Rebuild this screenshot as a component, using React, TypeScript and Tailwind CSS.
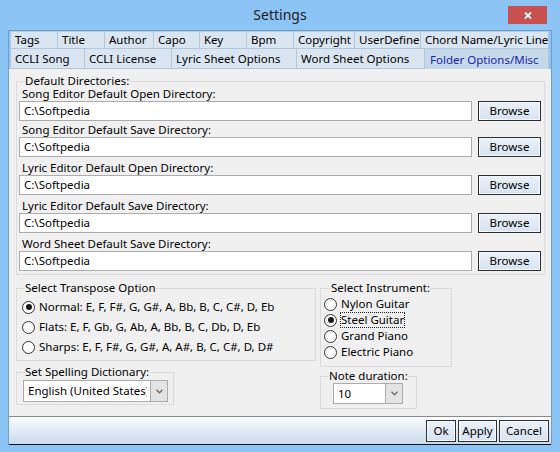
import React from "react"

const rowOne = [
	{ label: "Tags", w: "w-[47px]" },
	{ label: "Title", w: "w-[47px]" },
	{ label: "Author", w: "w-[49px]" },
	{ label: "Capo", w: "w-[46px]" },
	{ label: "Key", w: "w-[47px]" },
	{ label: "Bpm", w: "w-[47px]" },
	{ label: "Copyright", w: "w-[61px]" },
	{ label: "UserDefine", w: "w-[66px]" },
	{ label: "Chord Name/Lyric Line", w: "w-[128px]" },
]

const rowTwo = [
	{ label: "CCLI Song", w: "w-[74px]" },
	{ label: "CCLI License", w: "w-[87px]" },
	{ label: "Lyric Sheet Options", w: "w-[125px]" },
	{ label: "Word Sheet Options", w: "w-[128px]" },
	{ label: "Folder Options/Misc", w: "w-[124px]", current: true },
]

const dirs = [
	"Song Editor Default Open Directory:",
	"Song Editor Default Save Directory:",
	"Lyric Editor Default Open Directory:",
	"Lyric Editor Default Save Directory:",
	"Word Sheet Default Save Directory:",
]

function Tab({ label, w, current, tall }: { label: string; w: string; current?: boolean; tall?: boolean }) {
	if (current)
		return (
			<div className={`${w} h-[20px] bg-[#c5d9eb] border-r border-[#b4c8dc] pl-[5px] pt-[4px] leading-[14px] text-[#1e1eaa] whitespace-nowrap`}>
				{label}
			</div>
		)
	return (
		<div
			className={`${w} ${tall ? "h-[20px] leading-[19px]" : "h-[17px] leading-[16px]"} bg-[#d9e5f1] border-r border-b border-[#b4c8dc] pl-[4px] whitespace-nowrap`}
		>
			{label}
		</div>
	)
}

function WinButton({ children, w, h = "h-[22px]" }: { children: React.ReactNode; w: string; h?: string }) {
	return (
		<div
			className={`${w} ${h} border border-[#2f2f2f] bg-gradient-to-b from-[#eaf1f9] to-[#d6e3f1] shadow-[inset_0_0_0_1px_#f4f8fc] flex items-center justify-center leading-[14px]`}
		>
			{children}
		</div>
	)
}

function Radio({ label, checked, focus }: { label: string; checked?: boolean; focus?: boolean }) {
	return (
		<div className="flex items-center gap-[4px] h-full">
			<div className="w-[13px] h-[13px] rounded-full border border-[#333] bg-white flex items-center justify-center shrink-0">
				{checked && <div className="w-[6px] h-[6px] rounded-full bg-[#1a1a1a]" />}
			</div>
			<span className={`leading-[14px] whitespace-nowrap ${focus ? "outline outline-1 outline-dotted outline-[#222] outline-offset-0" : ""}`}>
				{label}
			</span>
		</div>
	)
}

function Chevron() {
	return (
		<svg width="7" height="5" viewBox="0 0 7 5">
			<path d="M0.5 0.8 L3.5 3.8 L6.5 0.8" fill="none" stroke="#6d6d6d" strokeWidth="1.3" />
		</svg>
	)
}

function Combo({ value, w, h = "h-[22px]" }: { value: string; w: string; h?: string }) {
	return (
		<div className={`${w} ${h} border border-[#acacac] bg-white flex items-stretch`}>
			<div className="flex-1 overflow-hidden whitespace-nowrap pl-[4px] mr-[3px] flex items-center">{value}</div>
			<div className="w-[17px] bg-[#e3e3e3] border-l border-[#acacac] flex items-center justify-center">
				<Chevron />
			</div>
		</div>
	)
}

export default function App() {
	return (
		<div className="w-[560px] h-[452px] bg-[#8cc4f5] flex flex-col font-['Noto_Sans',sans-serif] text-[11.5px] text-black">
			{/* title bar */}
			<div className="h-[30px] flex items-start shrink-0">
				<div className="w-[52px]" />
				<div className="flex-1 text-center text-[14px] leading-[30px] text-[#222]">Settings</div>
				<div className="w-[39px] h-[18px] mt-[6px] mr-[13px] bg-[#c75050] flex items-center justify-center">
					<svg width="8" height="7" viewBox="0 0 8 7">
						<path d="M1 0.5 L7 6.5 M7 0.5 L1 6.5" stroke="#fff" strokeWidth="1.8" />
					</svg>
				</div>
			</div>

			{/* window body */}
			<div className="mx-[8px] h-[415px] border-l border-r border-t border-[#6e9fd0] bg-[#f0f0f0] flex flex-col">
				<div className="pl-[1px] bg-[#8cc4f5]">
					<div className="flex border-l border-t border-[#b4c8dc] w-[539px]">
						{rowOne.map(t => (
							<Tab key={t.label} label={t.label} w={t.w} />
						))}
					</div>
					<div className="flex border-l border-[#b4c8dc] w-[539px]">
						{rowTwo.map(t => (
							<Tab key={t.label} label={t.label} w={t.w} current={t.current} tall />
						))}
					</div>
				</div>

				{/* panel */}
				<div className="flex-1 bg-[#f0f0f0] pl-[7px] flex flex-col">
					<fieldset className="w-[529px] mt-[6px] border border-[#dcdcdc] px-[2px] pb-[3px]">
						<legend className="ml-[6px] leading-[12px]">Default Directories:</legend>
						{dirs.map((d, i) => (
							<div key={d} className={i === 0 ? "" : i === 1 ? "mt-[2px]" : "mt-[4px]"}>
								<div className="pl-[3px] h-[14px] leading-[14px]">{d}</div>
								<div className="flex gap-[6px]">
									<div className="w-[453px] h-[20px] border border-[#acacac] bg-white pl-[4px] leading-[18px]">C:\Softpedia</div>
									<WinButton w="w-[63px]" h="h-[20px]">
										Browse
									</WinButton>
								</div>
							</div>
						))}
					</fieldset>

					<div className="flex gap-[4px] mt-[6px]">
						<div className="flex flex-col">
							<fieldset className="w-[300px] border border-[#dcdcdc] pl-[5px] pt-[2px] pb-[3px]">
								<legend className="ml-[3px] leading-[14px]">Select Transpose Option</legend>
								<div className="h-[20px]">
									<Radio label="Normal: E, F, F#, G, G#, A, Bb, B, C, C#, D, Eb" checked />
								</div>
								<div className="h-[20px]">
									<Radio label="Flats: E, F, Gb, G, Ab, A, Bb, B, C, Db, D, Eb" />
								</div>
								<div className="h-[20px]">
									<Radio label="Sharps: E, F, F#, G, G#, A, A#, B, C, C#, D, D#" />
								</div>
							</fieldset>

							<fieldset className="w-[158px] mt-[4px] border border-[#dcdcdc] pl-[6px] pb-[2px]">
								<legend className="ml-[2px] leading-[14px]">Set Spelling Dictionary:</legend>
								<div className="mt-[1px]">
									<Combo value="English (United States)" w="w-[145px]" />
								</div>
							</fieldset>
						</div>

						<div className="flex flex-col">
							<fieldset className="w-[132px] border border-[#dcdcdc] pl-[3px] pt-[1px] pb-[6px]">
								<legend className="ml-[7px] leading-[14px]">Select Instrument:</legend>
								<div className="h-[16px]">
									<Radio label="Nylon Guitar" />
								</div>
								<div className="h-[16px]">
									<Radio label="Steel Guitar" checked focus />
								</div>
								<div className="h-[16px]">
									<Radio label="Grand Piano" />
								</div>
								<div className="h-[16px]">
									<Radio label="Electric Piano" />
								</div>
							</fieldset>

							<fieldset className="w-[97px] mt-[2px] border border-[#dcdcdc] pl-[12px] pb-[4px]">
								<legend className="ml-[-4px] leading-[14px]">Note duration:</legend>
								<Combo value="10" w="w-[70px]" h="h-[21px]" />
							</fieldset>
						</div>
					</div>
				</div>

				{/* button bar */}
				<div className="h-[29px] shrink-0 border-t border-b border-t-[#8a8a8a] border-b-[#111] bg-gradient-to-b from-[#fbfcfd] to-[#c8dbef] flex items-center justify-end gap-[2px] pr-[2px]">
					<WinButton w="w-[30px]">Ok</WinButton>
					<WinButton w="w-[39px]">Apply</WinButton>
					<WinButton w="w-[50px]">Cancel</WinButton>
				</div>
			</div>
		</div>
	)
}
